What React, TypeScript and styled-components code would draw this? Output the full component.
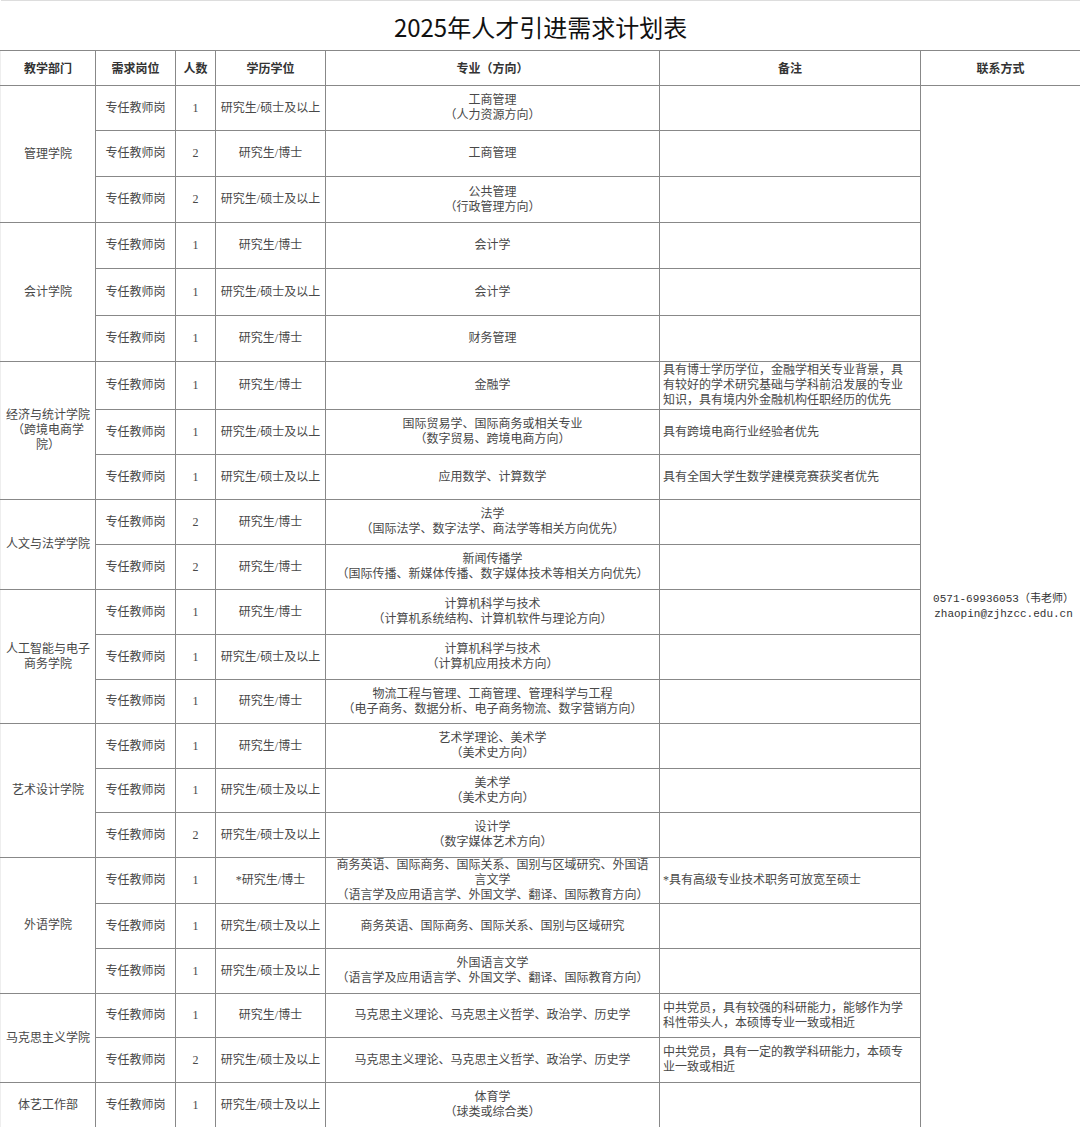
import styled, { createGlobalStyle } from 'styled-components';

const GlobalStyle = createGlobalStyle`
  html, body {
    margin: 0;
    padding: 0;
    background: #fff;
  }
`;

const Sheet = styled.table`
  width: 1080px;
  table-layout: fixed;
  border-collapse: collapse;
  font-family: 'Liberation Serif', 'Noto Sans CJK SC', serif;
  font-size: 12px;
  line-height: 15px;
  color: #484848;
`;

const TitleCell = styled.th`
  height: 47px;
  padding: 2px 0 0;
  border-top: 1px solid #ddd;
  border-bottom: 1px solid #888;
  font-family: 'Noto Sans CJK SC', 'Noto Sans', sans-serif;
  font-size: 24px;
  font-weight: 400;
  color: #111;
  text-align: center;
`;

const HeadCell = styled.th`
  height: 32px;
  padding: 2px 0 0;
  border: 1px solid #888;
  font-weight: 700;
  color: #333;
  text-align: center;
  vertical-align: middle;

  &:first-child {
    border-left: 1px solid #eee;
  }
`;

const Cell = styled.td<{ $left?: boolean }>`
  padding: 0 ${p => (p.$left ? '3px' : '0')};
  border: 1px solid #888;
  text-align: ${p => (p.$left ? 'left' : 'center')};
  vertical-align: middle;
  white-space: pre-line;
  overflow: hidden;

  &:first-child {
    border-left: 1px solid #eee;
  }
`;

const DeptCell = styled(Cell)`
  border-left: 1px solid #eee;
  padding: 0 2px;
`;

const ContactCell = styled(Cell)`
  padding-left: 6px;
  font-family: 'Liberation Mono', 'Noto Sans CJK SC', monospace;
  font-size: 11px;
  line-height: 15px;
  color: #333;
`;

type Row = {
  dept?: string;
  span?: number;
  count: number;
  degree: string;
  major: string;
  note?: string;
  h: number;
};

const MASTER = '研究生/硕士及以上';
const DOCTOR = '研究生/博士';

const rows: Row[] = [
  { dept: '管理学院', span: 3, count: 1, degree: MASTER, major: '工商管理\n（人力资源方向）', h: 45 },
  { count: 2, degree: DOCTOR, major: '工商管理', h: 46 },
  { count: 2, degree: MASTER, major: '公共管理\n（行政管理方向）', h: 46 },
  { dept: '会计学院', span: 3, count: 1, degree: DOCTOR, major: '会计学', h: 46 },
  { count: 1, degree: MASTER, major: '会计学', h: 47 },
  { count: 1, degree: DOCTOR, major: '财务管理', h: 46 },
  {
    dept: '经济与统计学院\n（跨境电商学\n院）',
    span: 3,
    count: 1,
    degree: DOCTOR,
    major: '金融学',
    note: '具有博士学历学位，金融学相关专业背景，具\n有较好的学术研究基础与学科前沿发展的专业\n知识，具有境内外金融机构任职经历的优先',
    h: 48,
  },
  {
    count: 1,
    degree: MASTER,
    major: '国际贸易学、国际商务或相关专业\n（数字贸易、跨境电商方向）',
    note: '具有跨境电商行业经验者优先',
    h: 45,
  },
  { count: 1, degree: MASTER, major: '应用数学、计算数学', note: '具有全国大学生数学建模竞赛获奖者优先', h: 45 },
  {
    dept: '人文与法学学院',
    span: 2,
    count: 2,
    degree: DOCTOR,
    major: '法学\n（国际法学、数字法学、商法学等相关方向优先）',
    h: 45,
  },
  { count: 2, degree: DOCTOR, major: '新闻传播学\n（国际传播、新媒体传播、数字媒体技术等相关方向优先）', h: 45 },
  {
    dept: '人工智能与电子\n商务学院',
    span: 3,
    count: 1,
    degree: DOCTOR,
    major: '计算机科学与技术\n（计算机系统结构、计算机软件与理论方向）',
    h: 45,
  },
  { count: 1, degree: MASTER, major: '计算机科学与技术\n（计算机应用技术方向）', h: 45 },
  {
    count: 1,
    degree: DOCTOR,
    major: '物流工程与管理、工商管理、管理科学与工程\n（电子商务、数据分析、电子商务物流、数字营销方向）',
    h: 44,
  },
  { dept: '艺术设计学院', span: 3, count: 1, degree: DOCTOR, major: '艺术学理论、美术学\n（美术史方向）', h: 45 },
  { count: 1, degree: MASTER, major: '美术学\n（美术史方向）', h: 44 },
  { count: 2, degree: MASTER, major: '设计学\n（数字媒体艺术方向）', h: 45 },
  {
    dept: '外语学院',
    span: 3,
    count: 1,
    degree: '*研究生/博士',
    major: '商务英语、国际商务、国际关系、国别与区域研究、外国语\n言文学\n（语言学及应用语言学、外国文学、翻译、国际教育方向）',
    note: '*具有高级专业技术职务可放宽至硕士',
    h: 44,
  },
  { count: 1, degree: MASTER, major: '商务英语、国际商务、国际关系、国别与区域研究', h: 45 },
  { count: 1, degree: MASTER, major: '外国语言文学\n（语言学及应用语言学、外国文学、翻译、国际教育方向）', h: 45 },
  {
    dept: '马克思主义学院',
    span: 2,
    count: 1,
    degree: DOCTOR,
    major: '马克思主义理论、马克思主义哲学、政治学、历史学',
    note: '中共党员，具有较强的科研能力，能够作为学\n科性带头人，本硕博专业一致或相近',
    h: 44,
  },
  {
    count: 2,
    degree: MASTER,
    major: '马克思主义理论、马克思主义哲学、政治学、历史学',
    note: '中共党员，具有一定的教学科研能力，本硕专\n业一致或相近',
    h: 45,
  },
  { dept: '体艺工作部', span: 1, count: 1, degree: MASTER, major: '体育学\n（球类或综合类）', h: 45 },
];

const widths = [95, 80, 40, 110, 334, 261, 160];

export default function App() {
  return (
    <>
      <GlobalStyle />
      <Sheet>
        <colgroup>
          {widths.map((w, i) => (
            <col key={i} style={{ width: w }} />
          ))}
        </colgroup>
        <thead>
          <tr>
            <TitleCell colSpan={7}>2025年人才引进需求计划表</TitleCell>
          </tr>
          <tr>
            <HeadCell>教学部门</HeadCell>
            <HeadCell>需求岗位</HeadCell>
            <HeadCell>人数</HeadCell>
            <HeadCell>学历学位</HeadCell>
            <HeadCell>专业（方向）</HeadCell>
            <HeadCell>备注</HeadCell>
            <HeadCell>联系方式</HeadCell>
          </tr>
        </thead>
        <tbody>
          {rows.map((r, i) => (
            <tr key={i} style={{ height: r.h }}>
              {r.dept && <DeptCell rowSpan={r.span}>{r.dept}</DeptCell>}
              <Cell>专任教师岗</Cell>
              <Cell>{r.count}</Cell>
              <Cell>{r.degree}</Cell>
              <Cell>{r.major}</Cell>
              <Cell $left>{r.note ?? ''}</Cell>
              {i === 0 && (
                <ContactCell rowSpan={rows.length}>
                  {'0571-69936053（韦老师）\nzhaopin@zjhzcc.edu.cn'}
                </ContactCell>
              )}
            </tr>
          ))}
        </tbody>
      </Sheet>
    </>
  );
}
